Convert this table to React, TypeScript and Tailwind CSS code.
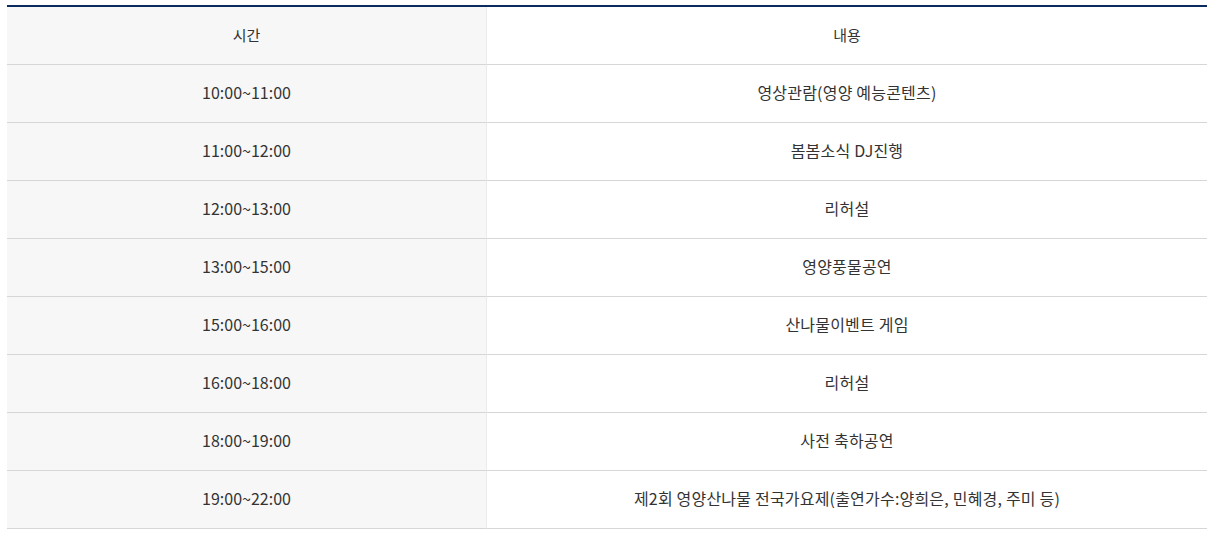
import React from 'react';

const rows: [string, string][] = [
  ['10:00~11:00', '영상관람(영양 예능콘텐츠)'],
  ['11:00~12:00', '봄봄소식 DJ진행'],
  ['12:00~13:00', '리허설'],
  ['13:00~15:00', '영양풍물공연'],
  ['15:00~16:00', '산나물이벤트 게임'],
  ['16:00~18:00', '리허설'],
  ['18:00~19:00', '사전 축하공연'],
  ['19:00~22:00', '제2회 영양산나물 전국가요제(출연가수:양희은, 민혜경, 주미 등)'],
];

const cell = 'h-[58px] flex items-center justify-center border-b border-b-[#d6d6d6]';
const left = 'bg-[#f7f7f7] border-r border-r-[#ebebeb]';

export default function App() {
  return (
    <div
      className="bg-white min-h-screen pt-[5px] pl-[7px] text-[#333]"
      style={{ fontFamily: '"Noto Sans CJK KR", "Noto Sans", sans-serif' }}
    >
      <div className="w-[1200px] border-t-2 border-[#0b2b5c]">
        <div className="grid grid-cols-[480px_720px]">
          {/* header */}
          <div className={`${cell} ${left} text-[15px]`}>시간</div>
          <div className={`${cell} bg-white text-[15px]`}>내용</div>

          {rows.map(([time, desc]) => (
            <React.Fragment key={time}>
              <div className={`${cell} ${left} text-[16px] pb-[3px]`}>{time}</div>
              <div className={`${cell} bg-white text-[16px] tracking-[0.2px] pb-[3px]`}>{desc}</div>
            </React.Fragment>
          ))}
        </div>
      </div>
    </div>
  );
}
